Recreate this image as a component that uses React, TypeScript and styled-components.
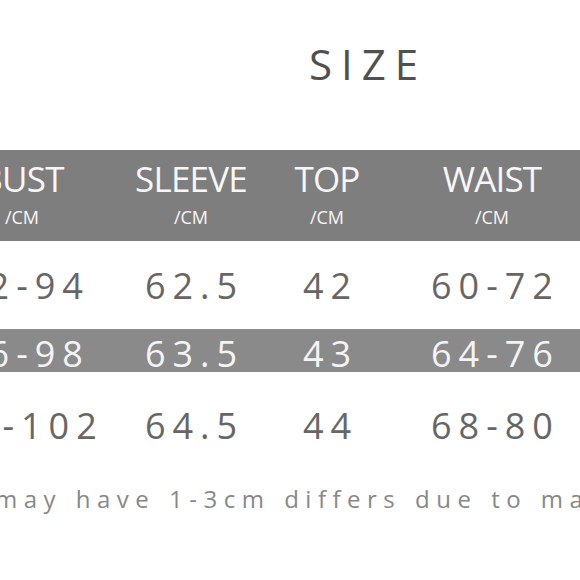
import React from "react";
import styled, { createGlobalStyle } from "styled-components";

const GlobalStyle = createGlobalStyle`
  html, body {
    margin: 0;
    padding: 0;
    background: #ffffff;
  }
  body {
    width: 580px;
    height: 580px;
    overflow: hidden;
    font-family: "Open Sans", "Liberation Sans", sans-serif;
  }
`;

const Page = styled.div`
  width: 580px;
  height: 580px;
  overflow: hidden;
  display: flex;
  flex-direction: column;
`;

const Title = styled.h1`
  margin: 0;
  height: 150px;
  display: flex;
  align-items: center;
  justify-content: center;
  padding: 0 0 24px 156px;
  box-sizing: border-box;
  font-family: "Open Sans", sans-serif;
  font-weight: 400;
  font-size: 42px;
  letter-spacing: 9px;
  color: #505050;
`;

const Table = styled.div`
  margin-left: -70px;
  width: 900px;
  display: flex;
  flex-direction: column;
`;

const Row = styled.div<{ $height: number; $band?: string }>`
  display: grid;
  grid-template-columns: 184px 154px 118px 212px 232px;
  height: ${({ $height }) => $height}px;
  background: ${({ $band }) => $band || "transparent"};
  align-items: center;
`;

const HeadCell = styled.div`
  display: flex;
  flex-direction: column;
  align-items: center;
  color: #f7f7f7;
`;

const HeadName = styled.span`
  font-family: "Open Sans", sans-serif;
  font-size: 35px;
  line-height: 36px;
  letter-spacing: -0.8px;
  margin-top: -4px;
`;

const HeadUnit = styled.span`
  font-family: "Open Sans", sans-serif;
  font-weight: 500;
  font-size: 18px;
  line-height: 20px;
  margin-top: 10px;
`;

const Cell = styled.div<{ $light?: boolean }>`
  text-align: center;
  font-family: "Open Sans", sans-serif;
  font-size: 36px;
  letter-spacing: 7px;
  padding-left: 7px;
  color: ${({ $light }) => ($light ? "#f4f4f4" : "#666666")};
`;

const Note = styled.p`
  margin: 0 0 0 -5px;
  height: 40px;
  display: flex;
  align-items: center;
  white-space: nowrap;
  font-family: "Open Sans", sans-serif;
  font-size: 24px;
  letter-spacing: 6.5px;
  word-spacing: 1px;
  color: #888888;
`;

const headers = ["BUST", "SLEEVE", "TOP", "WAIST", "HIP"];

const rows = [
  { values: ["92-94", "62.5", "42", "60-72", "90-96"], height: 88 },
  { values: ["86-98", "63.5", "43", "64-76", "94-100"], height: 43, band: "#8a8a8a" },
  { values: ["90-102", "64.5", "44", "68-80", "98-104"], height: 106 },
];

const App: React.FC = () => {
  return (
    <Page>
      <GlobalStyle />
      <Title>SIZE</Title>
      <Table>
        <Row $height={91} $band="#7e7e7e">
          {headers.map((h) => (
            <HeadCell key={h}>
              <HeadName>{h}</HeadName>
              <HeadUnit>/CM</HeadUnit>
            </HeadCell>
          ))}
        </Row>
        {rows.map((r, i) => (
          <Row key={i} $height={r.height} $band={r.band}>
            {r.values.map((v, j) => (
              <Cell key={j} $light={!!r.band}>
                {v}
              </Cell>
            ))}
          </Row>
        ))}
      </Table>
      <Note>may have 1-3cm differs due to manual measurement</Note>
    </Page>
  );
};

export default App;
